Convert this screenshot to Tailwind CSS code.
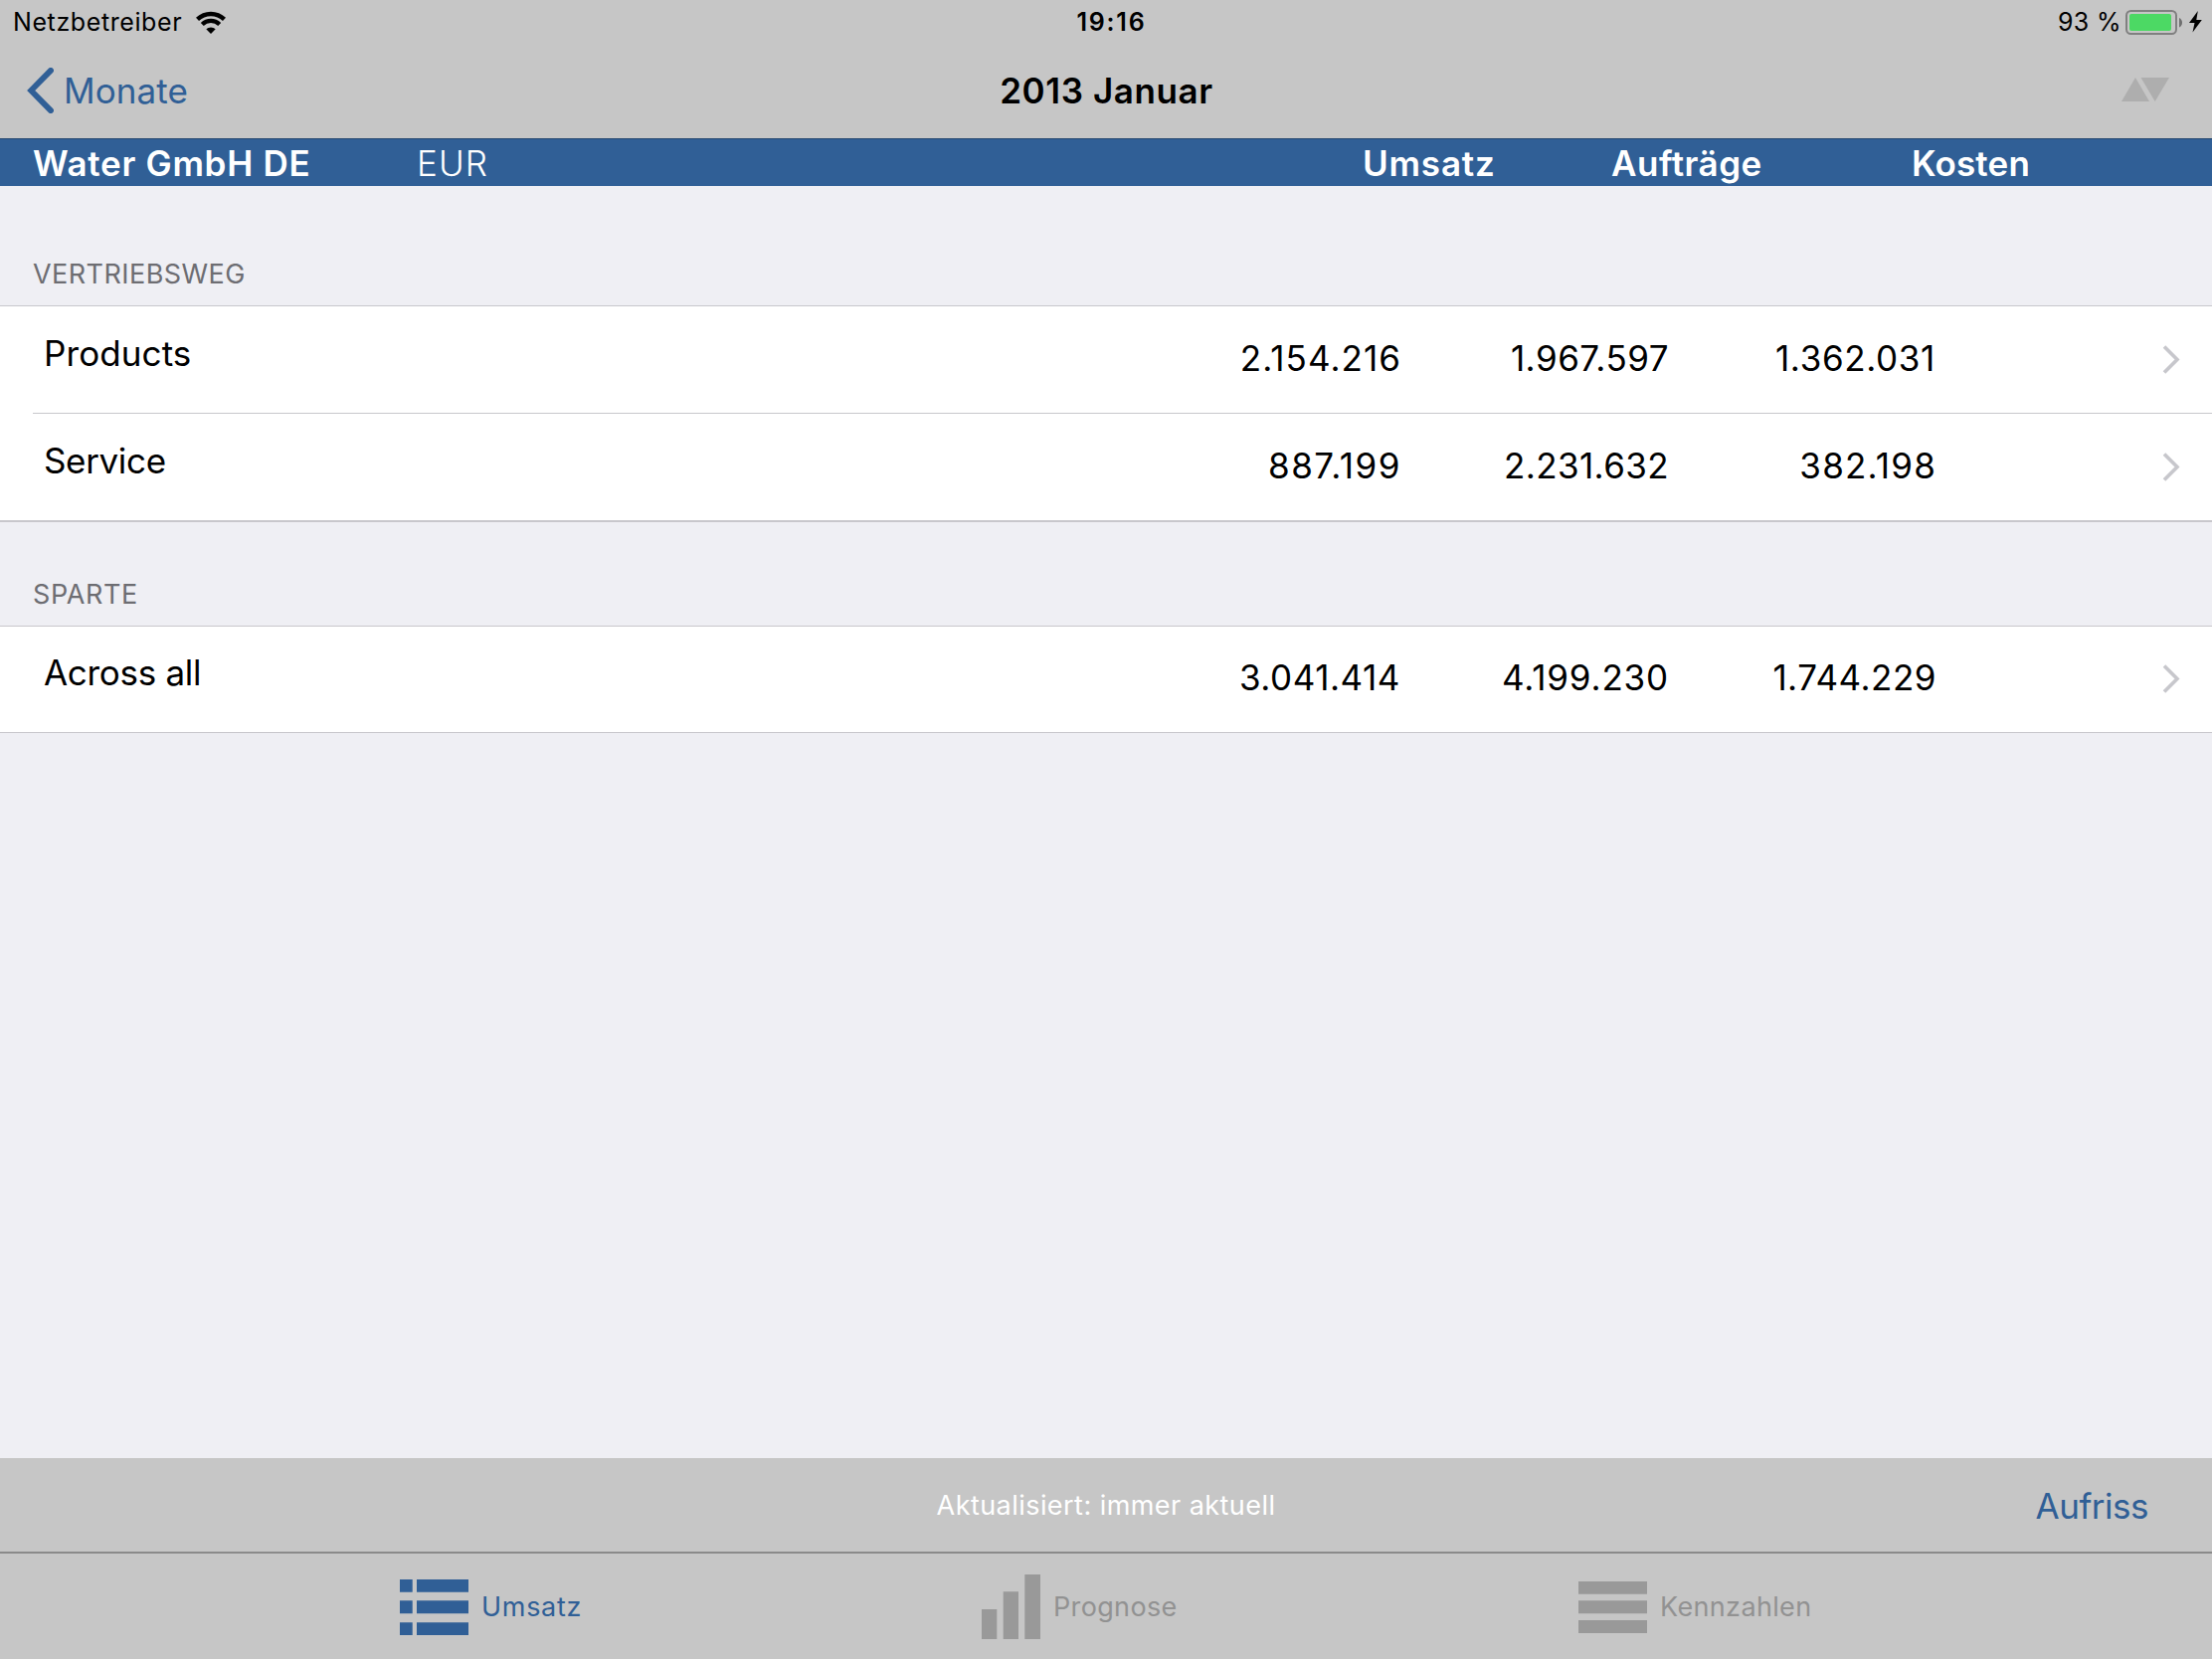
<!DOCTYPE html>
<html lang="de">
<head>
  <meta charset="UTF-8">
  <meta name="viewport" content="width=device-width,initial-scale=1">
  <title>2013 Januar</title>
  <script src="https://cdn.jsdelivr.net/npm/@tailwindcss/browser@4"></script>
</head>
<body class="font-['Inter','Liberation_Sans',sans-serif] bg-[#efeff4] w-[2224px] h-[1668px] flex flex-col overflow-hidden text-black whitespace-nowrap">

<!-- ────────── STATUS BAR ────────── -->
<div class="h-[45px] bg-[#c6c6c6] grid grid-cols-[1fr_auto_1fr] items-center pl-[13px] pr-[10px] text-[25px] leading-[45px]">
  <div class="flex items-center">
    <span class="tracking-[0.6px]">Netzbetreiber</span>
    <svg class="ml-[14px] mb-px" width="30" height="23" viewBox="0 0 30 23" fill="none" stroke="#000">
      <path d="M1.500 8.400a19.500 19.500 0 0 1 27 0" stroke-width="4.400"/>
      <path d="M6.300 13.400a12.500 12.500 0 0 1 17.400 0" stroke-width="4.200"/>
      <path d="M10.300 18.300a6.800 6.800 0 0 1 9.400 0L15 23z" fill="#000" stroke="none"/>
    </svg>
  </div>
  <span class="font-semibold tracking-[1.8px] pl-[8px]">19:16</span>
  <div class="flex items-center justify-end">
    <span class="tracking-[0.4px]">93 %</span>
    <svg class="ml-[4px] mb-px" width="58" height="25" viewBox="0 0 58 25">
      <rect x="1" y="1" width="50" height="23" rx="4.500" fill="none" stroke="#808080" stroke-width="2"/>
      <rect x="4" y="4" width="42" height="17" rx="2" fill="#4cd964"/>
      <path d="M54 8c4 1.500 4 8 0 9.500z" fill="#707070"/>
    </svg>
    <svg class="ml-[6px] mb-px" width="13" height="22" viewBox="0 0 13 22">
      <path d="M8.800 0 0 12h5.500L3.500 21.500 12.800 9H7.300z" fill="#000"/>
    </svg>
  </div>
</div>

<!-- ────────── NAVIGATION ────────── -->
<header class="h-[94px] bg-[#c6c6c6] grid grid-cols-[1fr_auto_1fr] items-center pl-[27px] pr-[43px] pb-[2px] text-[35px]">
  <a class="flex items-center text-[#305f96]">
    <svg width="27" height="46" viewBox="0 0 27 46" fill="none" stroke="#305f96" stroke-width="5.800" stroke-linecap="round" stroke-linejoin="miter">
      <path d="M24 2.900 4.200 23 24 43.100"/>
    </svg>
    <span class="ml-[10px] tracking-[0.1px]">Monate</span>
  </a>
  <h1 class="font-semibold tracking-[0.6px] pl-[17px]">2013 Januar</h1>
  <svg class="justify-self-end mb-[2px]" width="48" height="24" viewBox="0 0 48 24" fill="#aeaeae">
    <path d="M14 0 28 24H0z"/>
    <path d="M19.500 0H48L33.700 24z"/>
  </svg>
</header>

<!-- ────────── COLUMN HEADINGS ────────── -->
<div class="h-[48px] bg-[#305f96] border-t border-[#25476f] text-white text-[35px] leading-[48px] font-semibold flex pl-[33px]">
  <span class="w-[386px] tracking-[0.7px]">Water GmbH DE</span>
  <span class="w-[951px] font-light tracking-[1.1px]">EUR</span>
  <span class="w-[250px] tracking-[0.8px]">Umsatz</span>
  <span class="w-[302px] tracking-[0.5px]">Aufträge</span>
  <span class="tracking-[0.2px]">Kosten</span>
</div>

<main class="flex-1">
  <!-- Vertriebsweg -->
  <h2 class="h-[120px] flex items-end pl-[33px] pb-[15px] text-[27px] leading-8 tracking-[0.45px] text-[#6d6d72]">VERTRIEBSWEG</h2>
  <div class="bg-white border-t border-b-2 border-[#c8c7cc] text-[35px] leading-[42px]">
    <div class="h-[107px] grid grid-cols-[1099px_266px_269px_268px_1fr] items-center pl-[44px] pr-[32px] text-right">
      <span class="text-left pb-[13px] tracking-[0.1px]">Products</span>
      <span class="pb-[4px] tracking-[1.05px]">2.154.216</span>
      <span class="pb-[4px] tracking-[0.5px]">1.967.597</span>
      <span class="pb-[4px] tracking-[0.65px]">1.362.031</span>
      <svg class="justify-self-end mb-px" width="18" height="29" viewBox="0 0 18 29" fill="none" stroke="#c7c7cc" stroke-width="3.600"><path d="M2 1.500 15 14.500 2 27.500"/></svg>
    </div>
    <div class="ml-[33px] h-px bg-[#c8c7cc]"></div>
    <div class="h-[107px] grid grid-cols-[1099px_266px_269px_269px_1fr] items-center pl-[44px] pr-[32px] text-right">
      <span class="text-left pb-[13px] tracking-[-0.35px]">Service</span>
      <span class="pb-[3px] tracking-[1.5px]">887.199</span>
      <span class="pb-[3px] tracking-[0.4px]">2.231.632</span>
      <span class="pb-[3px] tracking-[1.2px]">382.198</span>
      <svg class="justify-self-end mb-px" width="18" height="29" viewBox="0 0 18 29" fill="none" stroke="#c7c7cc" stroke-width="3.600"><path d="M2 1.500 15 14.500 2 27.500"/></svg>
    </div>
  </div>

  <!-- Sparte -->
  <h2 class="h-[104px] flex items-end pl-[33px] pb-[15px] text-[27px] leading-8 tracking-[0.6px] text-[#6d6d72]">SPARTE</h2>
  <div class="bg-white border-y border-[#c8c7cc] text-[35px] leading-[42px]">
    <div class="h-[106px] grid grid-cols-[1099px_265px_270px_269px_1fr] items-center pl-[44px] pr-[32px] text-right">
      <span class="text-left pb-[14px] tracking-[-0.3px]">Across all</span>
      <span class="pb-[5px] tracking-[0.55px]">3.041.414</span>
      <span class="pb-[5px] tracking-[0.85px]">4.199.230</span>
      <span class="pb-[5px] tracking-[0.5px]">1.744.229</span>
      <svg class="justify-self-end mb-[2px]" width="18" height="29" viewBox="0 0 18 29" fill="none" stroke="#c7c7cc" stroke-width="3.600"><path d="M2 1.500 15 14.500 2 27.500"/></svg>
    </div>
  </div>
</main>

<!-- ────────── TOOLBAR ────────── -->
<div class="h-[94px] bg-[#c6c6c6] grid grid-cols-[1fr_auto_1fr] items-center px-[64px]">
  <span></span>
  <span class="text-[27px] tracking-[0.45px] text-white pt-[2px]">Aktualisiert: immer aktuell</span>
  <a class="justify-self-end text-[35px] tracking-[-0.5px] text-[#305f96] pt-[2px]">Aufriss</a>
</div>

<!-- ────────── TAB BAR ────────── -->
<nav class="h-[108px] bg-[#c6c6c6] border-t-2 border-[#8a8a8a] flex items-center text-[27px] text-[#929292] pl-[402px]">
  <a class="w-[585px] flex items-center text-[#305f96] pt-[2px]">
    <svg width="69" height="56" viewBox="0 0 69 56" fill="#305f96">
      <path d="M0 0h12.700v12.700H0zM17 0h52v12.700H17zM0 21.300h12.700v13H0zM17 21.300h52v13H17zM0 43.200h12.700V56H0zM17 43.200h52V56H17z"/>
    </svg>
    <span class="ml-[13px] pt-px tracking-[0.7px]">Umsatz</span>
  </a>
  <a class="w-[600px] flex items-center">
    <svg width="59" height="65" viewBox="0 0 59 65" fill="#999999">
      <path d="M0 35h15.300v30H0zM21.700 17.300H37V65H21.700zM43.300 0H59v65H43.300z"/>
    </svg>
    <span class="ml-[13px] pt-[3px] tracking-[0.35px]">Prognose</span>
  </a>
  <a class="flex items-center pt-[2px]">
    <svg width="69" height="52" viewBox="0 0 69 52" fill="#999999">
      <path d="M0 0h69v12.700H0zM0 19.300h69v13H0zM0 39h69v13H0z"/>
    </svg>
    <span class="ml-[13px] pt-px tracking-[0.35px]">Kennzahlen</span>
  </a>
</nav>

</body>
</html>
